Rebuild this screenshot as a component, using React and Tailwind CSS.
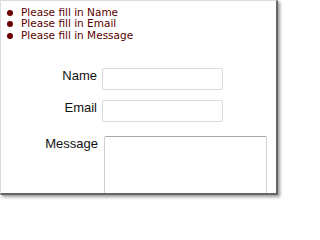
export default function App() {
  const errors = ['Please fill in Name', 'Please fill in Email', 'Please fill in Message']

  return (
    <div className="w-[288px] h-[205px] bg-white">
      <div className="w-[278px] h-[195px] bg-white border-t border-l border-[#dcdcdc] border-r-2 border-b-2 border-r-[#666] border-b-[#666] shadow-[2px_2px_3px_rgba(0,0,0,0.4)] overflow-hidden">
        <ul className="pt-[6px] pl-[5px] font-['DejaVu_Sans',sans-serif] text-[10.5px] leading-[11.4px] text-[#5a0000]">
          {errors.map(e => (
            <li key={e} className="flex items-center">
              <span className="w-[6px] h-[6px] rounded-full bg-[#6b0000] ml-[1px] mr-[8px]" />
              <span>{e}</span>
            </li>
          ))}
        </ul>

        <div className="mt-[27px] flex flex-col font-['Liberation_Sans',Arial,sans-serif] text-[13px] leading-[15px] text-[#111]">
          <div className="flex items-start">
            <label className="w-[96px] text-right">Name</label>
            <input className="ml-[5px] w-[121px] h-[22px] border border-[#dadada] rounded-[2px] bg-white" />
          </div>
          <div className="flex items-start mt-[10px]">
            <label className="w-[96px] text-right">Email</label>
            <input className="ml-[5px] w-[121px] h-[22px] border border-[#dadada] rounded-[2px] bg-white" />
          </div>
          <div className="flex items-start mt-[14px]">
            <label className="w-[97px] text-right">Message</label>
            <textarea className="ml-[6px] w-[163px] h-[80px] border border-[#d0d0d0] border-t-[#a8a8a8] rounded-[2px] bg-white resize-none" />
          </div>
        </div>
      </div>
    </div>
  )
}
